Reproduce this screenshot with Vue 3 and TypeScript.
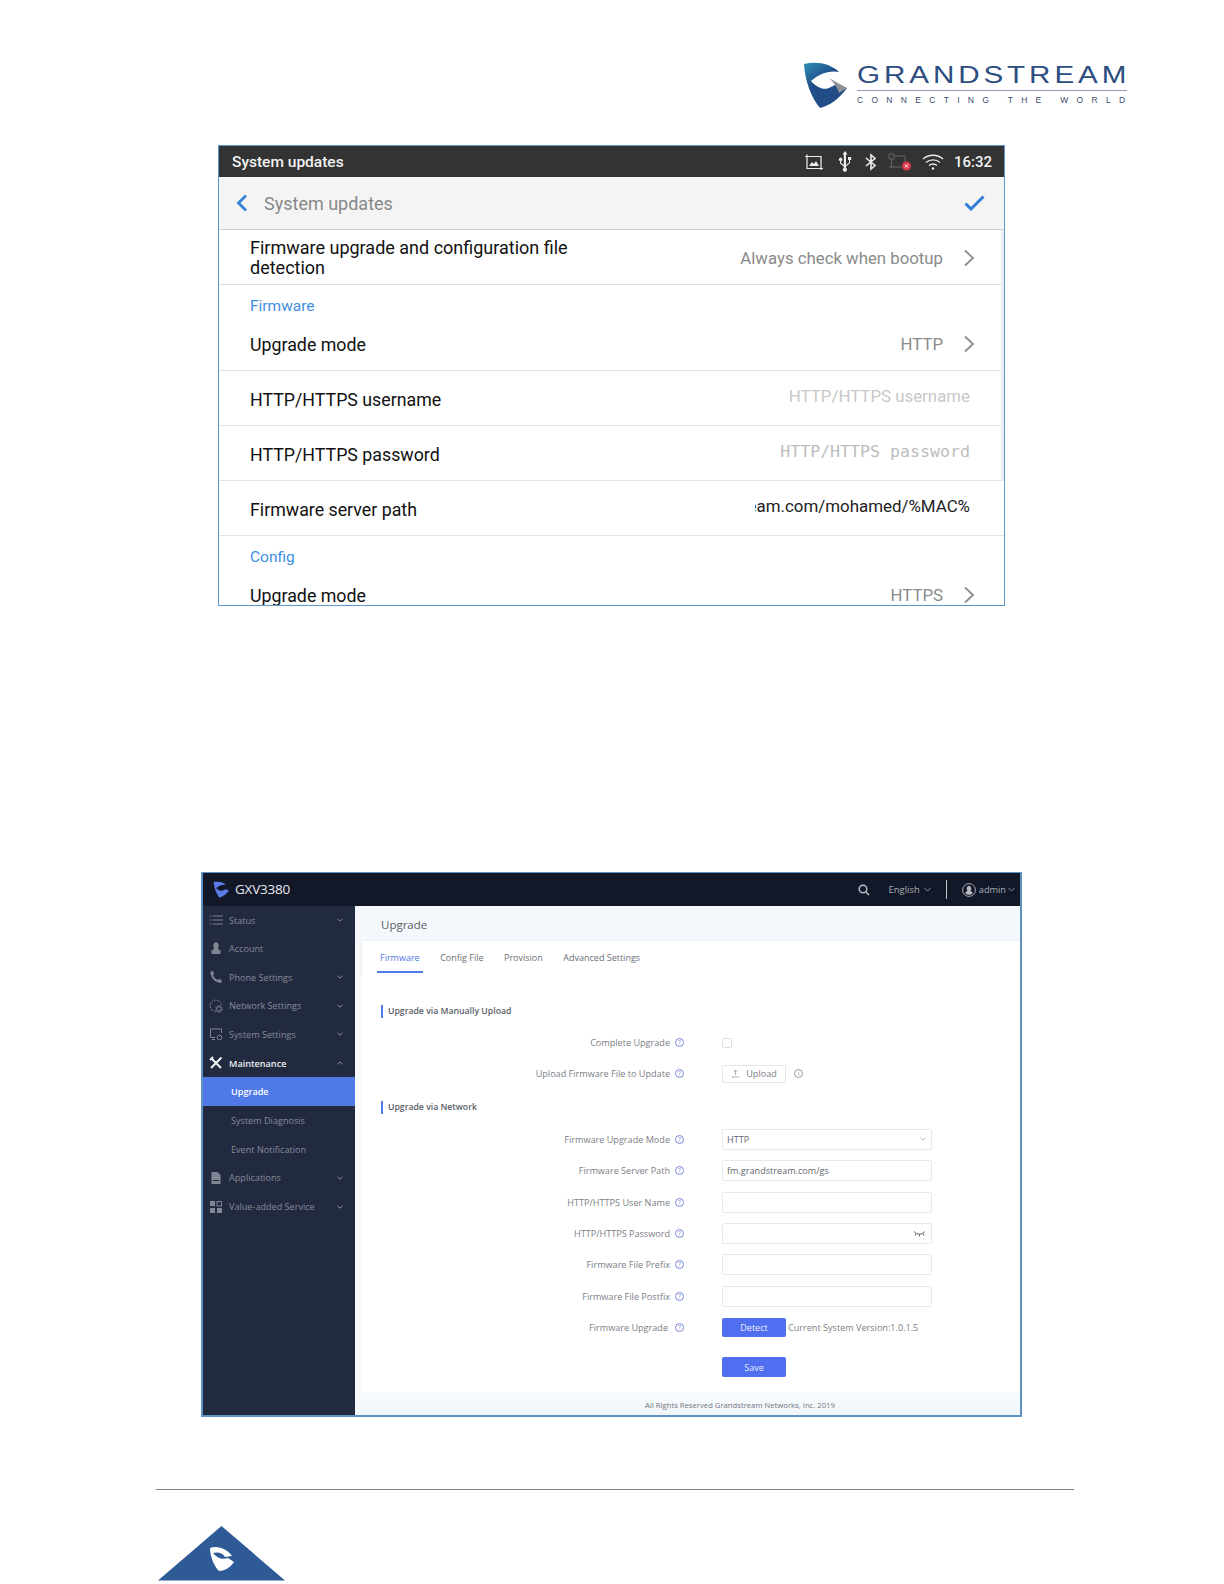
<script setup lang="ts">
const menu = [
  { label: 'Status', icon: 'list', arrow: 'down' },
  { label: 'Account', icon: 'user', arrow: '' },
  { label: 'Phone Settings', icon: 'phone', arrow: 'down' },
  { label: 'Network Settings', icon: 'net', arrow: 'down' },
  { label: 'System Settings', icon: 'sys', arrow: 'down' },
  { label: 'Maintenance', icon: 'tools', arrow: 'up', strong: true },
  { label: 'Upgrade', sub: true, active: true },
  { label: 'System Diagnosis', sub: true },
  { label: 'Event Notification', sub: true },
  { label: 'Applications', icon: 'doc', arrow: 'down' },
  { label: 'Value-added Service', icon: 'apps', arrow: 'down' },
]
const tabs = ['Firmware', 'Config File', 'Provision', 'Advanced Settings']
const netRows = [
  { label: 'Firmware Server Path', value: 'fm.grandstream.com/gs' },
  { label: 'HTTP/HTTPS User Name', value: '' },
  { label: 'HTTP/HTTPS Password', value: '', eye: true },
  { label: 'Firmware File Prefix', value: '' },
  { label: 'Firmware File Postfix', value: '' },
]
</script>

<template>
  <div class="page">
    <header class="brand">
      <svg class="brand-mark" viewBox="0 0 46 48" width="46" height="48">
        <defs>
          <linearGradient id="gm" x1="0" y1="0" x2="0.7" y2="1">
            <stop offset="0" stop-color="#2f8fb5" />
            <stop offset="0.45" stop-color="#1f4f8a" />
            <stop offset="1" stop-color="#234a83" />
          </linearGradient>
        </defs>
        <path d="M1 3 C14 0 28 3 36 11 C26 9 16 13 8 20 C14 27 22 30 28 26 L34 23 L44 27 C36 38 26 45 17 47 C8 36 2 20 1 3Z" fill="url(#gm)" />
        <path d="M26 17 L44 27 L36 32 C34 25 30 21 26 17Z" fill="#8f9399" />
      </svg>
      <div class="brand-text">
        <div class="brand-line"><span class="brand-name">GRANDSTREAM</span></div>
        <div class="brand-tag">CONNECTING THE WORLD</div>
      </div>
    </header>

    <section class="phone">
      <div class="status">
        <span class="status-title">System updates</span>
        <div class="status-icons">
          <svg class="ic-photo" width="20" height="16" viewBox="0 0 20 16" fill="none" stroke="#eee" stroke-width="1.2">
            <path d="M3 .5V14.5H19M1 2.5H17V16" />
            <path d="M5 12l3-4 2 2 2-3 3 5z" fill="#eee" stroke="none" />
          </svg>
          <svg width="16" height="21" viewBox="0 0 16 21" fill="#eee">
            <path d="M8 0l2.5 3.5H9V14l3-2.5V9h-1V6h3.2v3H13v3L9 15.4V17a2 2 0 1 1-2.2 0v-1.4L3 12.500V10a1.700 1.700 0 1 1 1.200 0v2l2.600 2V3.500H5.500z" />
          </svg>
          <svg width="12" height="18" viewBox="0 0 12 18" fill="none" stroke="#eee" stroke-width="1.600">
            <path d="M1 5l9 7.500L6 16V2l4 3.500L1 13" />
          </svg>
          <svg class="ic-net" width="24" height="18" viewBox="0 0 24 18" fill="none" stroke="#666" stroke-width="1">
            <path d="M1 1h5v5H1zM3.500 6v8H14M1 14h5M7 3h10v8" />
            <circle cx="18.500" cy="13" r="4.500" fill="#d9394a" stroke="none" />
            <path d="M16.800 11.300l3.400 3.400M20.200 11.300l-3.400 3.400" stroke="#fff" />
          </svg>
          <svg width="22" height="16" viewBox="0 0 22 16" fill="none" stroke="#eee" stroke-width="1.300">
            <path d="M1 5c5.500-5 14.500-5 20 0M4 8.500c4-3.500 10-3.500 14 0M7 11.500c2.400-1.800 5.600-1.800 8 0" />
            <circle cx="11" cy="14.500" r="1.200" fill="#eee" stroke="none" />
          </svg>
          <span class="clock">16:32</span>
        </div>
      </div>
      <div class="titlebar">
        <svg class="back" width="12" height="18" viewBox="0 0 12 18" fill="none" stroke="#3584d8" stroke-width="2.800">
          <path d="M10 1.500L2.500 9l7.500 7.500" />
        </svg>
        <span class="title-text">System updates</span>
        <svg class="check" width="21" height="16" viewBox="0 0 21 16" fill="none" stroke="#2f7fd6" stroke-width="3">
          <path d="M1.500 8.500L7 14 19.500 1.500" />
        </svg>
      </div>

      <div class="list">
        <div class="row row-tall">
          <span class="row-label first">Firmware upgrade and configuration file<br />detection</span>
          <span class="row-value">Always check when bootup</span>
          <svg class="chev" width="12" height="18" viewBox="0 0 12 18" fill="none" stroke="#8c8c8c" stroke-width="1.800"><path d="M2 1.500L10 9l-8 7.500" /></svg>
        </div>
        <div class="group">
          <div class="group-title">Firmware</div>
          <div class="row row-group">
            <span class="row-label">Upgrade mode</span>
            <span class="row-value">HTTP</span>
            <svg class="chev" width="12" height="18" viewBox="0 0 12 18" fill="none" stroke="#8c8c8c" stroke-width="1.800"><path d="M2 1.500L10 9l-8 7.500" /></svg>
          </div>
        </div>
        <div class="row row-input">
          <span class="row-label">HTTP/HTTPS username</span>
          <span class="hint">HTTP/HTTPS username</span>
        </div>
        <div class="row row-input">
          <span class="row-label">HTTP/HTTPS password</span>
          <span class="hint mono">HTTP/HTTPS password</span>
        </div>
        <div class="row row-input">
          <span class="row-label">Firmware server path</span>
          <span class="clip"><span>fm.grandstream.com/mohamed/%MAC%</span></span>
        </div>
        <div class="group group-last">
          <div class="group-title">Config</div>
          <div class="row row-group">
            <span class="row-label">Upgrade mode</span>
            <span class="row-value">HTTPS</span>
            <svg class="chev" width="12" height="18" viewBox="0 0 12 18" fill="none" stroke="#8c8c8c" stroke-width="1.800"><path d="M2 1.500L10 9l-8 7.500" /></svg>
          </div>
        </div>
      </div>
      <span class="scrollbar"></span>
    </section>

    <section class="web">
      <div class="topbar">
        <svg class="top-logo" width="17" height="17" viewBox="0 0 46 48">
          <path d="M1 3 C14 0 28 3 36 11 C26 9 16 13 8 20 C14 27 22 30 28 26 L34 23 L44 27 C36 38 26 45 17 47 C8 36 2 20 1 3Z" fill="#5a7be8" />
        </svg>
        <span class="model">GXV3380</span>
        <svg class="search" width="12" height="12" viewBox="0 0 12 12" fill="none" stroke="#b9bcc4" stroke-width="1.500">
          <circle cx="5" cy="5" r="3.800" /><path d="M8 8l3 3" />
        </svg>
        <span class="lang">English</span>
        <svg class="mini" width="7" height="5" viewBox="0 0 7 5" fill="none" stroke="#8d9098" stroke-width="1"><path d="M.5 1l3 3 3-3" /></svg>
        <span class="divider"></span>
        <svg class="avatar" width="14" height="14" viewBox="0 0 14 14">
          <circle cx="7" cy="7" r="6.400" fill="none" stroke="#a7a9b0" />
          <path d="M7 2.800a2.400 2.800 0 0 1 1.600 4.700c0 .8 1.500 1.300 2.300 2.400A5 5 0 0 1 3.100 9.900C3.900 8.800 5.400 8.300 5.400 7.500A2.400 2.800 0 0 1 7 2.800z" fill="#b6b8be" />
        </svg>
        <span class="user">admin</span>
        <svg class="mini" width="7" height="5" viewBox="0 0 7 5" fill="none" stroke="#8d9098" stroke-width="1"><path d="M.5 1l3 3 3-3" /></svg>
      </div>
      <div class="web-body">
        <aside class="side">
          <div
            v-for="m in menu"
            :key="m.label"
            class="item"
            :class="{ sub: m.sub, active: m.active, strong: m.strong }"
          >
            <svg v-if="m.icon" class="item-icon" width="14" height="14" viewBox="0 0 14 14">
              <g v-if="m.icon === 'list'" fill="none" stroke="#7f8592" stroke-width="1">
                <path d="M4 3h10M4 7h10M4 11h10M1 3h1.500M1 7h1.500M1 11h1.500" />
              </g>
              <path v-else-if="m.icon === 'user'" fill="#7f8592" d="M7 1a3 3.500 0 0 1 2 5.800c0 1 .6 1.500 1 2.200h1.500v4h-9V9H4c.4-.7 1-1.200 1-2.200A3 3.500 0 0 1 7 1z" />
              <path v-else-if="m.icon === 'phone'" fill="#7f8592" d="M1.500 1.500L4 1l1.300 3L4 5.200c.8 1.800 2.500 3.700 4.500 4.800l1.300-1.300 3 1.500L12.300 13C6 13 1.200 7.500 1.500 1.500z" />
              <g v-else-if="m.icon === 'net'" fill="none" stroke="#7f8592" stroke-width="1">
                <path d="M6.500 12.500A5.700 5.700 0 1 1 12.500 6" stroke-dasharray="2 1" />
                <circle cx="10" cy="10" r="2.400" />
                <circle cx="10" cy="10" r="3.400" stroke-dasharray="1 1.300" />
              </g>
              <g v-else-if="m.icon === 'sys'" fill="none" stroke="#7f8592" stroke-width="1">
                <path d="M6 10.500H1.500V2h11v4M3 12.500h3" />
                <circle cx="10.500" cy="10.500" r="2.300" />
              </g>
              <path v-else-if="m.icon === 'tools'" fill="none" stroke="#f2f3f5" stroke-width="2" d="M2 2l10 10M12.500 1.500L2 12M1 4l3-3" />
              <g v-else-if="m.icon === 'doc'">
                <path fill="#7f8592" d="M2.500 1h6l3 3v9h-9z" />
                <path stroke="#222a40" stroke-width="1" d="M4 9.500h6" />
              </g>
              <g v-else fill="#7f8592">
                <rect x="1" y="1" width="5" height="5" />
                <rect x="8" y="1.500" width="4.500" height="4.500" fill="none" stroke="#7f8592" />
                <rect x="1" y="8" width="5" height="5" />
                <rect x="8" y="8" width="5" height="5" />
              </g>
            </svg>
            <span class="item-label">{{ m.label }}</span>
            <svg v-if="m.arrow" class="item-arrow" width="6" height="4" viewBox="0 0 6 4" fill="none" stroke="#8e93a0" stroke-width="1">
              <path :d="m.arrow === 'down' ? 'M.5 .8L3 3.200 5.500 .8' : 'M.5 3.200L3 .8 5.500 3.200'" />
            </svg>
          </div>
        </aside>
        <main class="content">
          <div class="crumb">Upgrade</div>
          <nav class="tabs">
            <span v-for="(t, i) in tabs" :key="t" class="tab" :class="{ on: i === 0 }">{{ t }}</span>
          </nav>
          <div class="form">
            <h3 class="sect">Upgrade via Manually Upload</h3>
            <div class="frow frow-a">
              <span class="flabel">Complete Upgrade</span>
              <span class="help">?</span>
              <span class="box"></span>
            </div>
            <div class="frow frow-a">
              <span class="flabel">Upload Firmware File to Update</span>
              <span class="help">?</span>
              <span class="upload">
                <svg width="9" height="9" viewBox="0 0 9 9" fill="none" stroke="#9a9da5" stroke-width=".8"><path d="M.5 8h8M4.500 6V1M2.800 2.700L4.500 1l1.700 1.700" /></svg>
                Upload
              </span>
              <span class="info">i</span>
            </div>
            <h3 class="sect sect-2">Upgrade via Network</h3>
            <div class="frow">
              <span class="flabel">Firmware Upgrade Mode</span>
              <span class="help">?</span>
              <span class="field select">HTTP
                <svg width="6" height="4" viewBox="0 0 6 4" fill="none" stroke="#9a9da5" stroke-width=".8"><path d="M.5 .8L3 3.200 5.500 .8" /></svg>
              </span>
            </div>
            <div v-for="r in netRows" :key="r.label" class="frow">
              <span class="flabel">{{ r.label }}</span>
              <span class="help">?</span>
              <span class="field">{{ r.value }}
                <svg v-if="r.eye" class="eye" width="13" height="7" viewBox="0 0 13 7" fill="none" stroke="#5d6068" stroke-width="1"><path d="M1 1.500C4 5 9 5 12 1.500M3 3.500L2 5.500M6.500 4.500V6.500M10 3.500L11 5.500" /></svg>
              </span>
            </div>
            <div class="frow">
              <span class="flabel flabel-up">Firmware Upgrade</span>
              <span class="help">?</span>
              <span class="btn">Detect</span>
              <span class="version">Current System Version:1.0.1.5</span>
            </div>
            <div class="save-row"><span class="btn btn-save">Save</span></div>
          </div>
          <footer class="copy">All Rights Reserved Grandstream Networks, Inc. 2019</footer>
        </main>
      </div>
    </section>

    <footer class="foot">
      <svg class="foot-mark" width="128" height="56" viewBox="0 0 128 56">
        <path d="M63.500 0L127 54.500H0Z" fill="#2e5b96" />
        <path d="M52 22C60 19 69 23 74 30L67 31C64 26 58 26 55 27C59 32 64 34 70 32L76 36C72 42 66 45 61 45C56 40 52 30 52 22Z" fill="#fff" />
      </svg>
    </footer>
  </div>
</template>

<style>
html, body { margin: 0; background: #fff; }
</style>

<style scoped>
.page {
  width: 1224px;
  height: 1584px;
  overflow: hidden;
  background: #fff;
  font-family: "Open Sans", sans-serif;
}
.brand {
  display: flex;
  justify-content: flex-end;
  gap: 8px;
  padding: 61px 97px 0 0;
  height: 84px;
}
.brand-text { width: 270px; padding-top: 2px; }
.brand-line {
  border-bottom: 1px solid #8d9bb4;
  padding-bottom: 3px;
  height: 24px;
}
.brand-name {
  display: inline-block;
  font: 400 23.500px/24px "Liberation Sans", sans-serif;
  color: #2c4d80;
  letter-spacing: 3.100px;
  white-space: nowrap;
  transform: scaleX(1.26);
  transform-origin: left center;
}
.brand-tag {
  font: 400 8.500px/10px "Liberation Sans", sans-serif;
  color: #3b4d6c;
  letter-spacing: 8.300px;
  white-space: nowrap;
  margin-top: 4px;
}

.phone {
  position: relative;
  width: 787px;
  height: 461px;
  margin-left: 218px;
  border: 1px solid #5d97cc;
  box-sizing: border-box;
  overflow: hidden;
  font-family: Roboto, sans-serif;
  font-size: 17.800px;
  color: #111;
  background: #fff;
}
.scrollbar {
  position: absolute;
  right: 0;
  top: 84px;
  width: 3px;
  height: 251px;
  background: #ececf1;
}
.status {
  height: 31px;
  background: #333;
  color: #f2f2f2;
  display: flex;
  align-items: center;
  justify-content: space-between;
  padding: 0 12px 0 13px;
}
.status-title { font-size: 15.500px; font-weight: 500; }
.status-icons { display: flex; align-items: center; gap: 12px; }
.ic-photo { margin-right: 1px; }
.ic-net { margin: 0 -2px 0 -1px; }
.clock { font-size: 15px; font-weight: 500; margin-left: -2.500px; }
.titlebar {
  height: 53px;
  box-sizing: border-box;
  background: #f4f4f4;
  border-bottom: 1px solid #cfcfcf;
  display: flex;
  align-items: center;
  padding: 0 19px 0 17px;
}
.title-text { font-size: 18px; color: #888; margin-left: 16px; flex: 1; }
.list { display: flex; flex-direction: column; }
.row {
  display: flex;
  align-items: center;
  padding: 0 29px 0 31px;
  box-sizing: border-box;
}
.row-tall { height: 55px; border-bottom: 1px solid #ddd; line-height: 20.500px; padding-top: 2px; }
.row-group { height: 52px; }
.row-input { height: 55px; border-bottom: 1px solid #e2e2e2; padding-right: 34px; padding-top: 3px; }
.row-label { flex: 1; white-space: nowrap; }
.first { font-size: 18px; }
.row-value { color: #8a8a8a; font-size: 16.800px; margin-right: 20px; }
.group { border-bottom: 1px solid #e2e2e2; }
.group-last { border-bottom: 0; }
.group-title { color: #3f8fe0; font-size: 15.500px; padding: 11px 0 0 31px; line-height: 21px; height: 33px; box-sizing: border-box; }
.hint { color: #c8c8c8; font-size: 16.850px; transform: translateY(-4px); }
.mono { font-family: "DejaVu Sans Mono", monospace; font-size: 16.600px; color: #bdbdbd; transform: translateY(-3px); }
.clip { width: 215px; overflow: hidden; display: flex; justify-content: flex-end; transform: translateY(-4px); white-space: nowrap; font-size: 16.900px; color: #222; }

.web {
  width: 821px;
  height: 545px;
  margin: 266px 0 0 201px;
  border: 2px solid #5f93c3;
  border-top-width: 1px;
  box-sizing: border-box;
  display: flex;
  flex-direction: column;
  overflow: hidden;
  background: #fff;
}
.topbar {
  height: 33px;
  flex: none;
  box-sizing: border-box;
  background: #131829;
  display: flex;
  align-items: center;
  padding: 0 5px 0 10px;
  color: #a9acb4;
  font-size: 9.500px;
}
.model { color: #e7e9ee; font-size: 13.500px; margin: -2px 0 0 5px; flex: 1; letter-spacing: -.2px; }
.search { margin-right: 18px; }
.lang { margin-right: 4px; }
.divider { width: 1px; height: 19px; background: #c5c7cc; margin: 0 15px; }
.avatar { margin-right: 3px; }
.user { margin-right: 2px; font-size: 9.200px; }
.web-body { flex: 1; display: flex; min-height: 0; }
.side { width: 152px; flex: none; background: #222a40; }
.item {
  height: 28.700px;
  display: flex;
  align-items: center;
  padding: 0 12px 0 6px;
  color: #868b98;
  font-size: 9.100px;
}
.item:first-child { height: 28px; }
.item-icon { margin-right: 6px; flex: none; }
.item-label { flex: 1; white-space: nowrap; }
.strong { color: #eef0f4; font-weight: 600; }
.sub { padding-left: 28px; }
.active { background: #4f79e6; color: #fff; font-weight: 600; }
.content {
  flex: 1;
  min-width: 0;
  background: #f7fafd;
  display: flex;
  flex-direction: column;
  color: #6e727b;
}
.crumb {
  height: 35px;
  background: #f4f8fc;
  color: #5a5e68;
  font-size: 11.500px;
  line-height: 37px;
  padding-left: 26px;
  flex: none;
}
.tabs {
  height: 34px;
  flex: none;
  margin-left: 7px;
  background: #fff;
  display: flex;
  gap: 20.500px;
  padding-left: 18px;
  box-shadow: 0 1px 3px rgba(60, 80, 110, .14);
  font-size: 9px;
  line-height: 33px;
  color: #6b6f78;
}
.tab { height: 32px; box-sizing: border-box; }
.tab.on { color: #4f79e6; border-bottom: 2px solid #4f79e6; padding: 0 3px; margin: 0 -3px; }
.form { flex: 1; margin-left: 7px; background: #fff; padding: 29.500px 0 0 19px; }
.sect {
  margin: 0;
  border-left: 2px solid #4f79e6;
  padding-left: 5px;
  font: 600 8.700px/13px "Open Sans", sans-serif;
  color: #5a5e68;
  height: 13px;
}
.sect-2 { margin-top: 11.500px; }
.frow {
  height: 31.450px;
  display: flex;
  align-items: center;
  font-size: 9.100px;
  color: #7a7e87;
}
.frow-a { height: 31px; }
.sect + .frow { margin-top: 9.500px; }
.sect-2 + .frow { margin-top: 10px; }
.flabel { width: 315px; text-align: right; white-space: nowrap; flex: none; margin-left: -26px; }
.flabel-up { padding-right: 2px; box-sizing: border-box; }
.help, .info {
  width: 9px;
  height: 9px;
  flex: none;
  box-sizing: border-box;
  border: .8px solid #7b86d8;
  border-radius: 50%;
  color: #7b86d8;
  font-size: 6.500px;
  line-height: 7.500px;
  text-align: center;
  margin: 0 38px 0 5px;
}
.info { border-color: #999; color: #888; margin: 0 0 0 8px; }
.box {
  width: 8px;
  height: 8px;
  border: 1px solid #dcdde0;
  border-radius: 2px;
}
.upload {
  width: 64px;
  height: 18px;
  box-sizing: border-box;
  border: 1px solid #e4e5e8;
  border-radius: 2px;
  display: flex;
  align-items: center;
  justify-content: center;
  gap: 6px;
  color: #7a7e87;
}
.field {
  width: 210px;
  height: 21px;
  box-sizing: border-box;
  border: 1px solid #e8e9ec;
  border-radius: 2px;
  display: flex;
  align-items: center;
  justify-content: space-between;
  padding: 0 5px 0 4px;
  color: #5f6570;
}
.eye { margin-left: auto; }
.select { box-shadow: 0 0 1px rgba(0, 0, 0, .15); }
.btn {
  width: 64px;
  height: 19px;
  background: #4f6ff0;
  color: #e9edfd;
  border-radius: 2px;
  display: flex;
  align-items: center;
  justify-content: center;
  flex: none;
}
.version { margin-left: 2px; white-space: nowrap; }
.save-row { padding: 13.500px 0 0 341px; font-size: 9.100px; }
.btn-save { height: 20px; }
.copy {
  height: 23px;
  flex: none;
  background: linear-gradient(#f8fbfd, #f1f6fb);
  font-size: 7.700px;
  line-height: 26.500px;
  text-align: center;
  color: #72767f;
  padding-left: 105px;
}
.foot {
  margin: 72px 0 0 156px;
  width: 916px;
  border-top: 1px solid #808080;
  padding: 36px 0 0 2px;
}
.foot-mark { display: block; }
</style>
